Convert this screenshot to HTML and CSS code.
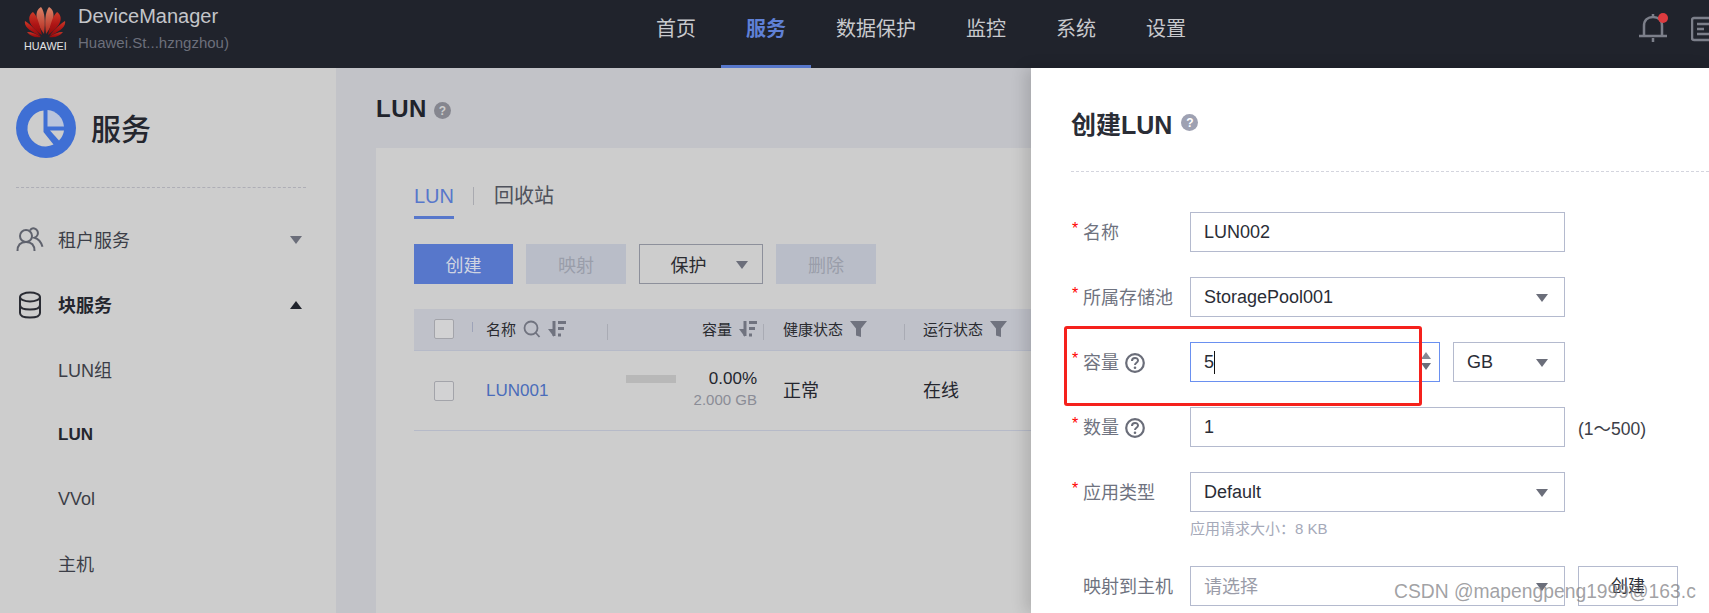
FILE: index.html
```html
<!DOCTYPE html>
<html lang="zh-CN">
<head>
  <meta charset="UTF-8" />
  <title>DeviceManager</title>
  <link rel="stylesheet" href="styles.css">
</head>
<body>
  <svg class="defs" width="0" height="0">
    <symbol id="sort" viewBox="0 0 18 18">
      <path d="M6 1v15" fill="none" stroke="currentColor" stroke-width="3"/>
      <path d="M0 9l6 8V9z" fill="currentColor"/>
      <path d="M10 1h8v3h-8zM10 7h6v3h-6zM10 13.500h3v3h-3z" fill="currentColor"/>
    </symbol>
    <symbol id="filter" viewBox="0 0 17 18">
      <path d="M0 1h17l-6 7.500V17l-5-1.500V8.500z" fill="currentColor"/>
    </symbol>
    <symbol id="help" viewBox="0 0 20 20">
      <circle cx="10" cy="10" r="8.800" fill="none" stroke="currentColor" stroke-width="2.200"/>
      <path d="M7 8c0-4 6-4 6-.5 0 2.300-3 2.300-3 4.500" fill="none" stroke="currentColor" stroke-width="2"/>
      <circle cx="10" cy="14.700" r="1.300" fill="currentColor"/>
    </symbol>
  </svg>

  <header class="topbar">
    <div class="brand">
      <div class="logo">
        <svg width="42" height="31" viewBox="0 0 42 31">
          <defs>
            <linearGradient id="petal" x1="0" y1="0" x2="0" y2="1">
              <stop offset="0" stop-color="#cc3a28"/>
              <stop offset="0.55" stop-color="#ae1414"/>
              <stop offset="1" stop-color="#8e0c0c"/>
            </linearGradient>
            <linearGradient id="petal-top" x1="0" y1="0" x2="0" y2="1">
              <stop offset="0" stop-color="#dc8468"/>
              <stop offset="1" stop-color="#b4261c"/>
            </linearGradient>
          </defs>
          <path d="M17 0C11 3 10 13 20 27c1.500-12 1-22-3-27z" fill="url(#petal-top)"/>
          <path d="M25 0c6 3 7 13-3 27-1.500-12-1-22 3-27z" fill="url(#petal-top)"/>
          <g fill="url(#petal)">
            <path d="M9 5C3 9 3 18 18 28 15.500 18 14 10 9 5z"/>
            <path d="M33 5c6 4 6 13-9 23 2.500-10 4-18 9-23z"/>
            <path d="M1 14C-.5 20 8 25 16.500 29 13 24 7 18 1 14z"/>
            <path d="M41 14c1.500 6-7 11-15.500 15C29 24 35 18 41 14z"/>
            <path d="M3 25c3 4 8 6 14 5-4-3-9-5-14-5z"/>
            <path d="M39 25c-3 4-8 6-14 5 4-3 9-5 14-5z"/>
          </g>
        </svg>
        <span class="logo-text">HUAWEI</span>
      </div>
      <div class="brand-text">
        <div class="brand-name">DeviceManager</div>
        <div class="brand-sub">Huawei.St...hzngzhou)</div>
      </div>
    </div>
    <nav class="topnav">
      <a>首页</a>
      <a class="active">服务</a>
      <a>数据保护</a>
      <a>监控</a>
      <a>系统</a>
      <a>设置</a>
    </nav>
    <div class="top-icons">
      <span class="bell">
        <svg width="28" height="30" viewBox="0 0 28 30">
          <path d="M5 23V13C5 7 9 4 14 4s9 3 9 9v10" fill="none" stroke="#7c7f8a" stroke-width="2.500"/>
          <path d="M0 23h28M14 1v3M14 25v4" stroke="#7c7f8a" stroke-width="2.500"/>
        </svg>
        <i class="bell-dot"></i>
      </span>
      <svg class="doc-icon" width="18" height="26" viewBox="0 0 18 26">
        <path d="M18 2H3a2 2 0 0 0-2 2v18a2 2 0 0 0 2 2h15" fill="none" stroke="#7c7f8a" stroke-width="2.500"/>
        <path d="M6 8h12M6 13h7M6 18h12" stroke="#7c7f8a" stroke-width="2.500"/>
      </svg>
    </div>
  </header>

  <div class="layout">
    <aside class="sidebar">
      <div class="side-head">
        <svg width="60" height="60" viewBox="0 0 60 60">
          <circle cx="30" cy="30" r="30" fill="#3f6fd4"/>
          <path d="M31.500 12A18 18 0 0 1 48 28.500H31.500z" fill="#b9c4dc"/>
          <path d="M34 32.500H48A18 18 0 0 1 43 42.500z" fill="#cdcdcd"/>
          <path d="M27.500 12.500A18 18 0 1 0 37.500 46.500L27.500 34z" fill="#cdcdcd"/>
        </svg>
        <span class="side-title">服务</span>
      </div>
      <ul class="side-menu">
        <li class="side-item">
          <svg class="side-icon" width="28" height="26" viewBox="0 0 28 26">
            <circle cx="10" cy="9" r="6" fill="none" stroke="#5f626d" stroke-width="2"/>
            <path d="M1.500 24c0-6 3-9 8.500-9s8.500 3 8.500 9" fill="none" stroke="#5f626d" stroke-width="2"/>
            <path d="M14 3.500c1-2 3-2.500 4.500-2 3 .8 4 4 3 6.500-.5 1.300-1.500 2.200-3 2.700 4 1 6.500 4 8 9" fill="none" stroke="#5f626d" stroke-width="2"/>
          </svg>
          <span class="side-label">租户服务</span>
          <i class="caret-down"></i>
        </li>
        <li class="side-item strong">
          <svg class="side-icon" width="28" height="28" viewBox="0 0 28 28">
            <ellipse cx="14" cy="6" rx="10" ry="4.500" fill="none" stroke="#2a2c34" stroke-width="2"/>
            <path d="M4 6v16c0 3 4.500 4.500 10 4.500S24 25 24 22V6M4 14c0 3 4.500 4.500 10 4.500S24 17 24 14" fill="none" stroke="#2a2c34" stroke-width="2"/>
          </svg>
          <span class="side-label">块服务</span>
          <i class="caret-up"></i>
        </li>
        <li class="side-item sub"><span class="side-label">LUN组</span></li>
        <li class="side-item sub strong"><span class="side-label latin">LUN</span></li>
        <li class="side-item sub"><span class="side-label latin">VVol</span></li>
        <li class="side-item sub"><span class="side-label tight">主机</span></li>
      </ul>
    </aside>

    <main class="content">
      <div class="page-head">
        <h1>LUN</h1>
        <span class="qmark">?</span>
      </div>
      <section class="panel">
        <div class="tabs">
          <span class="tab active">LUN</span>
          <i class="tab-sep"></i>
          <span class="tab">回收站</span>
        </div>
        <div class="toolbar">
          <button class="btn primary">创建</button>
          <button class="btn disabled">映射</button>
          <button class="btn outline">保护<i class="caret-down"></i></button>
          <button class="btn disabled">删除</button>
        </div>
        <div class="table">
          <div class="row head">
            <div class="cell c-check"><i class="checkbox"></i></div>
            <div class="cell c-name sep-short">名称
              <svg class="tool-icon" width="18" height="18" viewBox="0 0 18 18">
                <circle cx="8" cy="8" r="6.500" fill="none" stroke="currentColor" stroke-width="1.800"/>
                <path d="M12.500 12.500L16.500 17" stroke="currentColor" stroke-width="1.800"/>
              </svg>
              <svg class="tool-icon" width="18" height="18"><use href="#sort"/></svg>
            </div>
            <div class="cell c-size sep">容量
              <svg class="tool-icon" width="18" height="18"><use href="#sort"/></svg>
            </div>
            <div class="cell c-state sep">健康状态
              <svg class="tool-icon" width="17" height="18"><use href="#filter"/></svg>
            </div>
            <div class="cell c-run sep">运行状态
              <svg class="tool-icon" width="17" height="18"><use href="#filter"/></svg>
            </div>
          </div>
          <div class="row body">
            <div class="cell c-check"><i class="checkbox"></i></div>
            <div class="cell c-name"><a class="link">LUN001</a></div>
            <div class="cell c-size">
              <i class="usage-bar"></i>
              <div class="usage-text">
                <div class="pct">0.00%</div>
                <div class="total">2.000 GB</div>
              </div>
            </div>
            <div class="cell c-state">正常</div>
            <div class="cell c-run">在线</div>
          </div>
        </div>
      </section>
    </main>

    <div class="drawer">
      <div class="drawer-head">
        <h2>创建LUN</h2>
        <span class="qmark">?</span>
      </div>
      <form class="form">
        <div class="form-row">
          <label class="form-label"><b>*</b>名称</label>
          <div class="field wide">LUN002</div>
        </div>
        <div class="form-row">
          <label class="form-label"><b>*</b>所属存储池</label>
          <div class="field wide select">StoragePool001<i class="caret-down"></i></div>
        </div>
        <div class="form-row">
          <label class="form-label"><b>*</b>容量<svg class="help" width="20" height="20"><use href="#help"/></svg></label>
          <div class="field num focus">5<i class="cursor"></i>
            <span class="spin"><i class="spin-up"></i><i class="spin-down"></i></span>
          </div>
          <div class="field unit select">GB<i class="caret-down"></i></div>
        </div>
        <div class="form-row">
          <label class="form-label"><b>*</b>数量<svg class="help" width="20" height="20"><use href="#help"/></svg></label>
          <div class="field wide">1</div>
          <span class="range">(1～500)</span>
        </div>
        <div class="form-row has-hint">
          <label class="form-label"><b>*</b>应用类型</label>
          <div class="field wide select">Default<i class="caret-down"></i></div>
        </div>
        <div class="hint">应用请求大小：8 KB</div>
        <div class="form-row">
          <label class="form-label"><b></b>映射到主机</label>
          <div class="field wide select placeholder">请选择<i class="caret-down"></i></div>
          <button type="button" class="btn small-outline">创建</button>
        </div>
      </form>
    </div>
  </div>

  <div class="watermark">CSDN @mapengpeng1999@163.c</div>
</body>
</html>
```

FILE: styles.css
```css
* {
  box-sizing: border-box;
  font-family: 'Liberation Sans', 'Noto Sans CJK SC', sans-serif;
}

html, body {
  height: 100%;
}

body {
  margin: 0;
  overflow: hidden;
  position: relative;
  background: #c2c3c8;
  color: #24262e;
}

.defs {
  position: absolute;
}

ul {
  list-style: none;
  margin: 0;
  padding: 0;
}

i {
  display: block;
  font-style: normal;
}

/* top bar */
.topbar {
  display: flex;
  height: 68px;
  background: #20232c;
}

.brand {
  display: flex;
  width: 631px;
  padding-left: 24px;
}

.logo {
  display: flex;
  flex-direction: column;
  width: 42px;
  padding-top: 7px;
}

.logo svg {
  display: block;
}

.logo-text {
  margin-top: 1px;
  color: #e4e4e6;
  font-size: 10.800px;
  line-height: 14px;
  white-space: nowrap;
}

.brand-text {
  margin-left: 12px;
}

.brand-name {
  margin-top: 4px;
  color: #c4c5c9;
  font-size: 20px;
  line-height: 24px;
}

.brand-sub {
  margin-top: 3px;
  color: #6c6f7b;
  font-size: 15px;
  line-height: 24px;
}

.topnav {
  display: flex;
}

.topnav a {
  padding: 0 25px;
  color: #c8c9cd;
  font-size: 20px;
  line-height: 59px;
  border-bottom: 3px solid transparent;
  height: 68px;
}

.topnav a.active {
  color: #5f80d6;
  font-weight: 700;
  border-bottom-color: #5777cb;
}

.top-icons {
  display: flex;
  flex: 1;
  justify-content: flex-end;
  padding-top: 13px;
}

.bell {
  position: relative;
  width: 28px;
  height: 30px;
  margin-right: 24px;
}

.bell-dot {
  position: absolute;
  top: 0;
  right: -1px;
  width: 10px;
  height: 10px;
  border-radius: 50%;
  background: #dc3b3f;
}

.doc-icon {
  margin-top: 3px;
}

/* page */
.layout {
  display: flex;
  height: 545px;
  position: relative;
}

.sidebar {
  width: 336px;
  flex: none;
  padding: 30px 30px 0 16px;
  background: #cdcdcd;
}

.side-head {
  display: flex;
  align-items: center;
  gap: 15px;
  height: 90px;
  padding-bottom: 30px;
  border-bottom: 1px dashed #aeaeb6;
}

.side-title {
  color: #24262e;
  font-size: 30px;
  font-weight: 500;
  margin-top: -2px;
}

.side-menu {
  margin-top: 19px;
}

.side-item {
  display: flex;
  align-items: center;
  height: 65px;
  color: #3c3e47;
  font-size: 18px;
}

.side-label {
  margin-top: -2px;
}

.side-label.latin {
  margin-top: 0;
}

.side-label.tight {
  margin-top: -4px;
}

.side-icon {
  flex: none;
  margin-right: 14px;
  margin-top: 1px;
}

.side-item.strong {
  color: #24262e;
  font-weight: 700;
}

.side-item.sub {
  padding-left: 42px;
  font-size: 18px;
}

.side-item.sub.strong {
  font-size: 17px;
}

.side-item .caret-down,
.side-item .caret-up {
  margin-left: auto;
  margin-right: 4px;
}

.caret-down {
  width: 0;
  height: 0;
  border-left: 6.500px solid transparent;
  border-right: 6.500px solid transparent;
  border-top: 8px solid #6b6e7a;
}

.caret-up {
  width: 0;
  height: 0;
  border-left: 6.500px solid transparent;
  border-right: 6.500px solid transparent;
  border-bottom: 8px solid #20232c;
}

.content {
  flex: 1;
  padding: 0 0 0 40px;
  min-width: 0;
}

.page-head {
  display: flex;
  align-items: center;
  gap: 7px;
  height: 80px;
  padding-top: 2px;
}

.page-head h1 {
  margin: 0;
  color: #20232c;
  font-size: 24px;
  letter-spacing: 0.5px;
}

.qmark {
  display: flex;
  align-items: center;
  justify-content: center;
  width: 17px;
  height: 17px;
  margin-top: 3px;
  border-radius: 50%;
  background: #85868f;
  color: #cdcdcd;
  font-size: 12px;
  font-weight: 700;
}

.panel {
  height: 465px;
  padding: 30px 0 0 38px;
  background: #cdcdcd;
}

.tabs {
  display: flex;
  height: 41px;
}

.tab {
  color: #4f525c;
  font-size: 20px;
  line-height: 36px;
}

.tab.active {
  width: 40px;
  height: 41px;
  color: #5777cb;
  border-bottom: 3px solid #5777cb;
  white-space: nowrap;
}

.tab-sep {
  width: 1px;
  height: 18px;
  margin: 9px 20px 0 19px;
  background: #a9aab0;
}

.toolbar {
  display: flex;
  gap: 13px;
  margin-top: 25px;
}

.btn {
  display: flex;
  align-items: center;
  justify-content: center;
  width: 100px;
  height: 40px;
  padding: 0;
  border: 0;
  font-size: 18px;
}

.btn.primary {
  width: 99px;
  background: #5777cb;
  color: #cfd4e2;
}

.btn.disabled {
  background: #b9bdc8;
  color: #9a9eaa;
}

.btn.outline {
  position: relative;
  width: 124px;
  padding-right: 25px;
  border: 1.500px solid #8d909b;
  background: #cdcdcd;
  color: #2a2b30;
}

.btn.outline .caret-down {
  position: absolute;
  top: 16px;
  right: 14px;
}

.table {
  width: 617px;
  margin-top: 25px;
}

.row {
  display: flex;
}

.row.head {
  height: 42px;
  background: #bfc1c9;
  border-bottom: 1px solid #b6bac8;
  font-size: 15px;
  color: #2a2b30;
}

.row.body {
  height: 80px;
  border-bottom: 1px solid #b6bac8;
  font-size: 18px;
  color: #24262e;
}

.cell {
  display: flex;
  align-items: center;
  position: relative;
  flex: none;
}

.row.head .cell {
  padding-bottom: 2px;
}

.c-check {
  width: 58px;
  padding-left: 20px;
}

.c-name {
  width: 135px;
  padding-left: 14px;
}

.c-size {
  width: 156px;
  justify-content: flex-end;
  padding-right: 6px;
}

.c-state {
  width: 141px;
  padding-left: 20px;
}

.c-run {
  width: 127px;
  padding-left: 19px;
}

.row.body .c-state,
.row.body .c-run {
  padding-bottom: 3px;
}

.checkbox {
  width: 20px;
  height: 20px;
  border: 1.500px solid #a3a4aa;
  border-radius: 2px;
  background: #d2d2d3;
}

.sep::before,
.sep-short::before {
  content: "";
  position: absolute;
  left: 0;
  width: 1px;
  background: #a9abb4;
}

.sep::before {
  top: 15px;
  height: 16px;
}

.sep-short::before {
  top: 13px;
  height: 10px;
  background: #9da3b8;
}

.tool-icon {
  flex: none;
  margin-left: 7px;
  color: #70737f;
}

.link {
  color: #4a6cba;
  font-size: 17px;
}

.usage-bar {
  position: absolute;
  top: 24px;
  left: 19px;
  width: 50px;
  height: 8px;
  background: #b8b8b8;
}

.usage-text {
  text-align: right;
  padding-bottom: 3px;
}

.pct {
  font-size: 17px;
  line-height: 21px;
}

.total {
  color: #8a8c96;
  font-size: 15px;
  line-height: 21px;
}

/* drawer on top of the page */
.drawer {
  position: absolute;
  top: 0;
  bottom: 0;
  left: 1031px;
  right: 0;
  padding-left: 40px;
  background: #fff;
  box-shadow: -6px 0 14px rgba(0, 0, 0, 0.14);
}

.drawer-head {
  display: flex;
  align-items: center;
  gap: 9px;
  height: 104px;
  padding-top: 6px;
  border-bottom: 1px dashed #d4d5de;
}

.drawer-head h2 {
  margin: 0;
  color: #2a2d36;
  font-size: 25px;
  font-weight: 700;
}

.drawer-head .qmark {
  background: #9ea1b2;
  color: #fff;
  margin-top: 0;
}

.form {
  padding-top: 40px;
}

.form-row {
  display: flex;
  align-items: center;
  height: 40px;
  margin-bottom: 25px;
}

.form-row.has-hint {
  margin-bottom: 0;
}

.form-label {
  display: flex;
  align-items: center;
  width: 119px;
  height: 38px;
  margin-bottom: 2px;
  flex: none;
  color: #6f7380;
  font-size: 18px;
}

.form-label b {
  width: 12px;
  height: 18px;
  flex: none;
  padding-left: 1px;
  color: #f00;
  font-size: 16px;
  font-weight: 400;
  line-height: 14px;
}

.help {
  margin-left: 6px;
  margin-top: 3px;
  color: #6a6d79;
}

.field {
  display: flex;
  align-items: center;
  height: 40px;
  position: relative;
  padding-left: 13px;
  border: 1px solid #b4bace;
  color: #2a2d36;
  font-size: 18px;
}

.field.wide {
  width: 375px;
}

.field.num {
  width: 250px;
  margin-right: 13px;
}

.field.unit {
  width: 112px;
}

.field.focus {
  border-color: #6a90f0;
}

.field.placeholder {
  color: #9a9ca8;
  padding-bottom: 3px;
}

.field .caret-down {
  position: absolute;
  top: 16px;
  right: 16px;
  width: 0;
}

.cursor {
  width: 1px;
  height: 23px;
  background: #111;
}

.spin {
  position: absolute;
  top: 9px;
  right: 4px;
  width: 18px;
}

.spin-up {
  width: 0;
  margin: 0 auto 4px;
  border-left: 5.500px solid transparent;
  border-right: 5.500px solid transparent;
  border-bottom: 7px solid #868994;
}

.spin-down {
  width: 0;
  margin: 0 auto;
  border-left: 5.500px solid transparent;
  border-right: 5.500px solid transparent;
  border-top: 7px solid #6b6e7a;
}

.range {
  margin-left: 13px;
  color: #3c3e47;
  font-size: 17.500px;
}

.hint {
  height: 54px;
  padding: 5px 0 0 119px;
  color: #a5a9b9;
  font-size: 15px;
  line-height: 24px;
}

.btn.small-outline {
  margin-left: 13px;
  padding-bottom: 3px;
  border: 1px solid #b4bace;
  background: #fff;
  color: #2a2d36;
  font-size: 17px;
}

/* red box drawn over the capacity row */
.drawer::after {
  content: "";
  box-sizing: border-box;
  position: absolute;
  top: 258px;
  left: 33px;
  width: 358px;
  height: 80px;
  border: 3px solid #f5211c;
  border-radius: 3px;
}

.watermark {
  position: absolute;
  top: 578px;
  left: 1394px;
  color: rgba(120, 120, 125, 0.7);
  font-size: 19.300px;
  line-height: 28px;
  white-space: nowrap;
}
```
